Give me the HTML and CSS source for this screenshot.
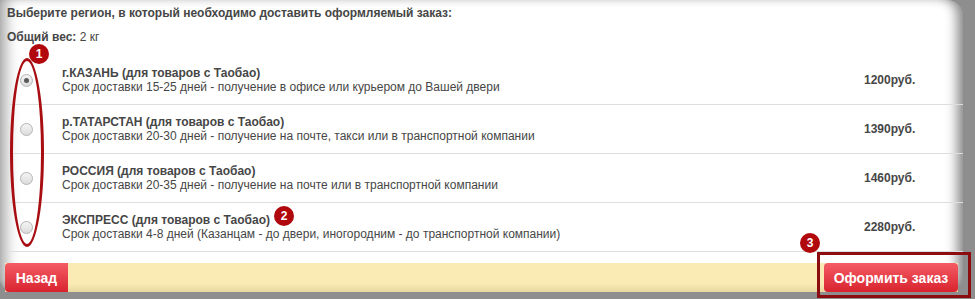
FILE: index.html
```html
<!DOCTYPE html>
<html lang="ru">
<head>
  <meta charset="UTF-8">
  <title>Доставка</title>
  <link rel="stylesheet" href="styles.css">
</head>
<body>
  <div class="page">
    <div class="frame">
      <div class="title">Выберите регион, в который необходимо доставить оформляемый заказ:</div>
      <div class="weight"><b>Общий вес:</b> 2 кг</div>

      <div class="rows">
        <div class="row">
          <div class="radio-cell"><span class="radio checked"></span></div>
          <div class="info">
            <div class="name">г.КАЗАНЬ (для товаров с Таобао)</div>
            <div class="desc">Срок доставки 15-25 дней - получение в офисе или курьером до Вашей двери</div>
          </div>
          <div class="price">1200руб.</div>
        </div>
        <div class="row">
          <div class="radio-cell"><span class="radio"></span></div>
          <div class="info">
            <div class="name">р.ТАТАРСТАН (для товаров с Таобао)</div>
            <div class="desc">Срок доставки 20-30 дней - получение на почте, такси или в транспортной компании</div>
          </div>
          <div class="price">1390руб.</div>
        </div>
        <div class="row">
          <div class="radio-cell"><span class="radio"></span></div>
          <div class="info">
            <div class="name">РОССИЯ (для товаров с Таобао)</div>
            <div class="desc">Срок доставки 20-35 дней - получение на почте или в транспортной компании</div>
          </div>
          <div class="price">1460руб.</div>
        </div>
        <div class="row">
          <div class="radio-cell"><span class="radio"></span></div>
          <div class="info">
            <div class="name">ЭКСПРЕСС (для товаров с Таобао)</div>
            <div class="desc">Срок доставки 4-8 дней (Казанцам - до двери, иногородним - до транспортной компании)</div>
          </div>
          <div class="price">2280руб.</div>
        </div>
      </div>

      <div class="bar">
        <button class="btn btn-back">Назад</button>
        <button class="btn btn-order">Оформить заказ</button>
      </div>
    </div>

    <!-- annotations -->
    <div class="oval"></div>
    <div class="box"></div>
    <span class="badge badge-1">1</span>
    <span class="badge badge-2">2</span>
    <span class="badge badge-3">3</span>
  </div>
</body>
</html>
```

FILE: styles.css
```css
body {
  margin: 0;
  background: #8e8e8e;
  font-family: "Liberation Sans", Arial, sans-serif;
  font-size: 12px;
  color: #464646;
}
.page {
  position: relative;
  width: 975px;
  height: 299px;
  overflow: hidden;
}
.frame {
  width: 963px;
  height: 292px;
  box-sizing: border-box;
  padding: 6px 0 0 7px;
  background: #fff;
  border-radius: 0 16px 16px 14px;
  box-shadow: inset 12px 0 14px -6px rgba(0, 0, 0, 0.35),
              inset -12px 0 12px -6px rgba(0, 0, 0, 0.45),
              inset 0 -6px 8px -5px rgba(0, 0, 0, 0.25);
}
.title {
  font-weight: bold;
  line-height: 14px;
}
.weight {
  margin-top: 10px;
  line-height: 14px;
}
.rows {
  margin-top: 12px;
}
.row {
  display: flex;
  align-items: center;
  height: 48px;
  border-bottom: 1px solid #dedede;
}
.radio-cell {
  width: 55px;
  display: flex;
  align-items: center;
  padding-left: 13px;
  box-sizing: border-box;
}
.radio {
  width: 11px;
  height: 11px;
  border-radius: 50%;
  border: 1px solid #b4b4b4;
  background: linear-gradient(#f4f4f4, #dcdcdc);
  position: relative;
}
.radio.checked::after {
  content: "";
  position: absolute;
  left: 3px;
  top: 3px;
  width: 5px;
  height: 5px;
  border-radius: 50%;
  background: #5a5a5a;
}
.info {
  flex: 1;
  line-height: 14px;
}
.name {
  font-weight: bold;
}
.price {
  width: 99px;
  font-weight: bold;
}
.bar {
  display: flex;
  justify-content: space-between;
  align-items: stretch;
  height: 29px;
  margin: 11px 5px 0 -2px;
  background: linear-gradient(#faeab4 0%, #faeab4 70%, #e8d8a0 100%);
}
.btn {
  border: none;
  color: #fff;
  font-family: inherit;
  font-weight: bold;
  font-size: 14px;
  background: linear-gradient(#f45c64, #d8232f);
  cursor: pointer;
}
.btn-back {
  width: 63px;
  border-radius: 4px 0 0 4px;
}
.btn-order {
  width: 134px;
  border-radius: 4px;
}
.oval {
  position: absolute;
  left: 10px;
  top: 58px;
  width: 28px;
  height: 183px;
  border: 3px solid #a80d12;
  border-radius: 50%;
}
.box {
  position: absolute;
  left: 817px;
  top: 252px;
  width: 148px;
  height: 40px;
  border: 3px solid #8c0d10;
}
.badge {
  position: absolute;
  width: 20px;
  height: 20px;
  border-radius: 50%;
  background: #b0080d;
  color: #fff;
  font-weight: bold;
  font-size: 12px;
  line-height: 20px;
  text-align: center;
}
.badge-1 { left: 29px; top: 44px; }
.badge-2 { left: 274px; top: 206px; }
.badge-3 { left: 800px; top: 233px; }
```
